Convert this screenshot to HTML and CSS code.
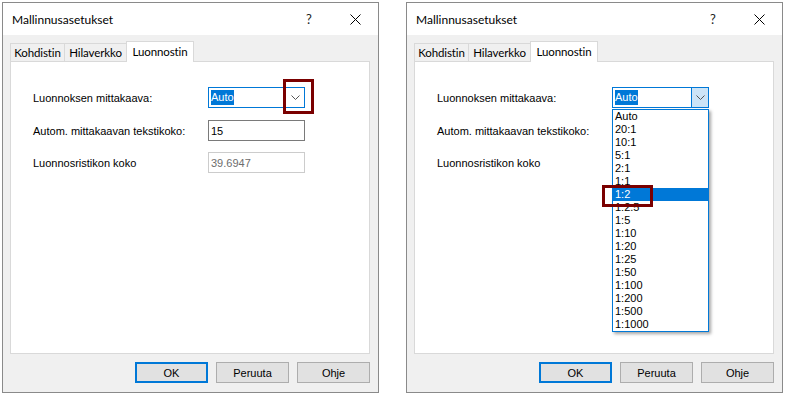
FILE: index.html
```html
<!DOCTYPE html>
<html lang="fi">
<head>
    <meta charset="UTF-8">
    <title>Mallinnusasetukset</title>
    <link rel="stylesheet" href="styles.css">
</head>
<body>
    <div class="screen">

        <!-- closed combobox -->
        <div class="dialog">
            <div class="titlebar">
                <span class="title">Mallinnusasetukset</span>
                <span class="help">?</span>
                <span class="close">
                    <svg width="11" height="11" viewBox="0 0 11 11"><path d="M0.5 0.5 L10.5 10.5 M10.5 0.5 L0.5 10.5" stroke="#000" stroke-width="1" fill="none"/></svg>
                </span>
            </div>
            <div class="dialog-body">
                <div class="tabs">
                    <div class="tab tab-1">Kohdistin</div>
                    <div class="tab tab-2">Hilaverkko</div>
                    <div class="tab tab-3 active">Luonnostin</div>
                </div>
                <div class="panel">
                    <div class="field-row">
                        <span class="label">Luonnoksen mittakaava:</span>
                        <div class="combo">
                            <span class="value">Auto</span>
                            <span class="combo-arrow">
                                <svg width="9" height="5" viewBox="0 0 9 5"><path d="M0.5 0.5 L4.5 4.5 L8.5 0.5" stroke="#555" stroke-width="1" fill="none"/></svg>
                            </span>
                            <span class="mark mark-arrow"></span>
                        </div>
                    </div>
                    <div class="field-row">
                        <span class="label">Autom. mittakaavan tekstikoko:</span>
                        <div class="input">15</div>
                    </div>
                    <div class="field-row">
                        <span class="label">Luonnosristikon koko</span>
                        <div class="input disabled">39.6947</div>
                    </div>
                </div>
                <div class="buttons">
                    <button class="btn default">OK</button>
                    <button class="btn">Peruuta</button>
                    <button class="btn">Ohje</button>
                </div>
            </div>
        </div>

        <!-- open combobox -->
        <div class="dialog">
            <div class="titlebar">
                <span class="title">Mallinnusasetukset</span>
                <span class="help">?</span>
                <span class="close">
                    <svg width="11" height="11" viewBox="0 0 11 11"><path d="M0.5 0.5 L10.5 10.5 M10.5 0.5 L0.5 10.5" stroke="#000" stroke-width="1" fill="none"/></svg>
                </span>
            </div>
            <div class="dialog-body">
                <div class="tabs">
                    <div class="tab tab-1">Kohdistin</div>
                    <div class="tab tab-2">Hilaverkko</div>
                    <div class="tab tab-3 active">Luonnostin</div>
                </div>
                <div class="panel">
                    <div class="field-row">
                        <span class="label">Luonnoksen mittakaava:</span>
                        <div class="combo open">
                            <span class="value">Auto</span>
                            <span class="combo-arrow">
                                <svg width="9" height="5" viewBox="0 0 9 5"><path d="M0.5 0.5 L4.5 4.5 L8.5 0.5" stroke="#555" stroke-width="1" fill="none"/></svg>
                            </span>
                            <ul class="dropdown">
                                <li>Auto</li>
                                <li>20:1</li>
                                <li>10:1</li>
                                <li>5:1</li>
                                <li>2:1</li>
                                <li>1:1</li>
                                <li class="selected">1:2</li>
                                <li>1:2.5</li>
                                <li>1:5</li>
                                <li>1:10</li>
                                <li>1:20</li>
                                <li>1:25</li>
                                <li>1:50</li>
                                <li>1:100</li>
                                <li>1:200</li>
                                <li>1:500</li>
                                <li>1:1000</li>
                            </ul>
                            <span class="mark mark-item"></span>
                        </div>
                    </div>
                    <div class="field-row">
                        <span class="label">Autom. mittakaavan tekstikoko:</span>
                    </div>
                    <div class="field-row">
                        <span class="label">Luonnosristikon koko</span>
                    </div>
                </div>
                <div class="buttons">
                    <button class="btn default">OK</button>
                    <button class="btn">Peruuta</button>
                    <button class="btn">Ohje</button>
                </div>
            </div>
        </div>

    </div>
</body>
</html>
```

FILE: styles.css
```css
* {
    box-sizing: border-box;
}

body {
    margin: 0;
    background-color: #fff;
    font-family: "Liberation Sans", Arial, sans-serif;
    font-size: 11px;
    color: #000;
}

.screen {
    display: flex;
    gap: 27px;
    padding: 2px 0 0 2px;
}

.dialog {
    width: 377px;
    height: 391px;
    border: 1px solid #8a8a8a;
    background-color: #f0f0f0;
    display: flex;
    flex-direction: column;
}

.titlebar {
    height: 32px;
    background-color: #fff;
    display: flex;
    align-items: center;
    padding-left: 9px;
    font-family: Lato, "Open Sans", sans-serif;
    font-size: 12px;
}

.title {
    flex: 1;
}

.help,
.close {
    width: 46px;
    height: 100%;
    display: flex;
    align-items: center;
    justify-content: center;
}

.help {
    font-size: 13px;
    color: #222;
}

.dialog-body {
    flex: 1;
    display: flex;
    flex-direction: column;
    padding: 6px 8px 9px 7px;
}

.tabs {
    display: flex;
    align-items: flex-end;
    height: 20px;
    position: relative;
    z-index: 1;
}

.tab {
    height: 18px;
    border: 1px solid #d9d9d9;
    border-bottom: none;
    margin-right: -1px;
    background-color: #f0f0f0;
    display: flex;
    align-items: center;
    justify-content: center;
    font-family: Lato, "Open Sans", sans-serif;
    font-size: 11.5px;
    letter-spacing: -0.1px;
}

.tab-1 { width: 55px; }
.tab-2 { width: 63px; }
.tab-3 { width: 68px; }

.tab.active {
    height: 21px;
    margin-bottom: -1px;
    background-color: #fff;
    padding-bottom: 2px;
}

.panel {
    height: 293px;
    background-color: #fff;
    border: 1px solid #d9d9d9;
    padding: 25px 0 0 22px;
}

.field-row {
    display: flex;
    align-items: center;
    height: 21px;
}

.field-row + .field-row {
    margin-top: 12px;
}

.field-row:last-child {
    margin-top: 11px;
}

.label {
    width: 175px;
}

.combo {
    position: relative;
    width: 97px;
    height: 21px;
    border: 1px solid #0078d7;
    background-color: #fff;
    display: flex;
    align-items: center;
}

.combo .value {
    margin-left: 2px;
    line-height: 15px;
    background-color: #0078d7;
    color: #fff;
}

.combo-arrow {
    margin-left: auto;
    width: 17px;
    height: 100%;
    display: flex;
    align-items: center;
    justify-content: center;
}

.combo.open .combo-arrow {
    background-color: #cce4f7;
    border-left: 1px solid #0078d7;
}

.dropdown {
    position: absolute;
    left: -1px;
    top: 21px;
    width: 97px;
    margin: 0;
    padding: 0;
    list-style: none;
    background-color: #fff;
    border: 1px solid #0078d7;
    box-shadow: 2px 2px 3px rgba(0, 0, 0, 0.35);
    z-index: 5;
}

.dropdown li {
    height: 13px;
    line-height: 13px;
    padding-left: 2px;
}

.dropdown li.selected {
    background-color: #0078d7;
    color: #fff;
}

.input {
    width: 97px;
    height: 21px;
    border: 1px solid #7a7a7a;
    background-color: #fff;
    padding-left: 2px;
    display: flex;
    align-items: center;
}

.input.disabled {
    border-color: #cccccc;
    color: #6d6d6d;
}

/* red annotation boxes drawn over the screenshot */
.mark {
    position: absolute;
    border: 3px solid #7a0000;
    z-index: 10;
}

.mark-arrow {
    left: 74px;
    top: -9px;
    width: 31px;
    height: 35px;
}

.mark-item {
    left: -11px;
    top: 97px;
    width: 51px;
    height: 22px;
}

.buttons {
    display: flex;
    justify-content: flex-end;
    gap: 8px;
    margin-top: 8px;
}

.btn {
    width: 73px;
    height: 21px;
    padding: 0;
    border: 1px solid #adadad;
    background-color: #e1e1e1;
    font-family: "Liberation Sans", Arial, sans-serif;
    font-size: 11px;
    color: #000;
}

.btn.default {
    border: 2px solid #0078d7;
}
```
